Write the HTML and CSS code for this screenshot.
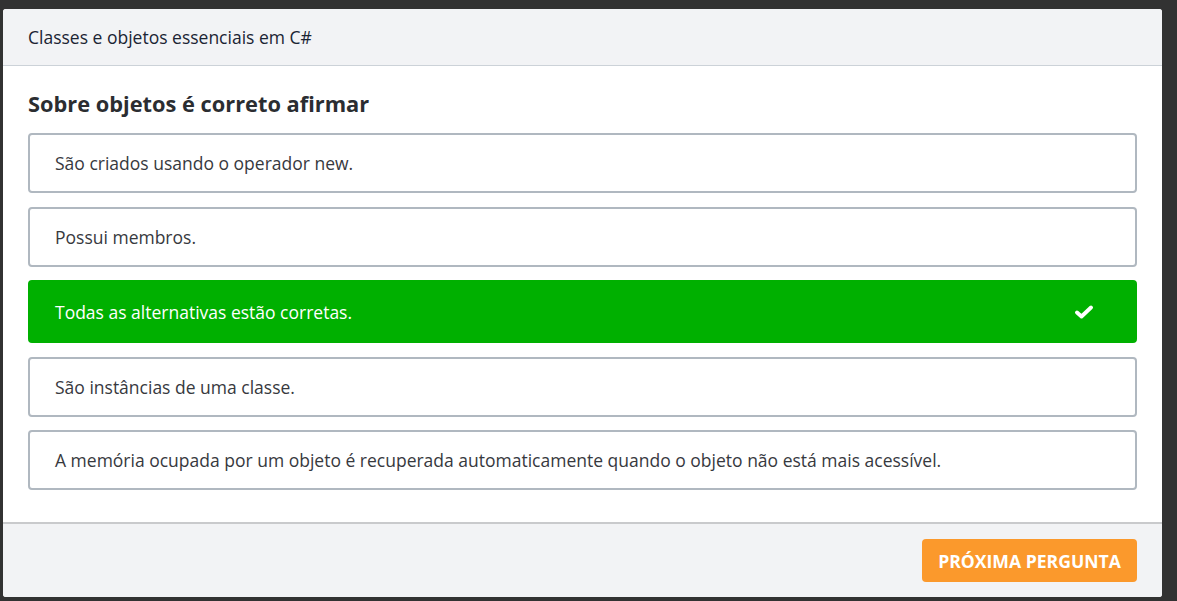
FILE: index.html
```html
<!DOCTYPE html>
<html lang="pt">
<head>
<meta charset="utf-8">
<title>Quiz</title>
<link rel="stylesheet" href="styles.css">
</head>
<body>
<div class="modal">
  <div class="modal-header">Classes e objetos essenciais em C#</div>
  <div class="modal-body">
    <h2 class="question">Sobre objetos é correto afirmar</h2>
    <div class="options">
      <div class="option">São criados usando o operador new.</div>
      <div class="option">Possui membros.</div>
      <div class="option correct">
        <span>Todas as alternativas estão corretas.</span>
        <svg class="check" width="18" height="14" viewBox="0 0 18 14"><path d="M2 7.5 L6.5 11.5 L16 2.5" fill="none" stroke="#fff" stroke-width="3.8" stroke-linecap="round" stroke-linejoin="round"/></svg>
      </div>
      <div class="option">São instâncias de uma classe.</div>
      <div class="option">A memória ocupada por um objeto é recuperada automaticamente quando o objeto não está mais acessível.</div>
    </div>
  </div>
  <div class="modal-footer">
    <button class="next-btn">PRÓXIMA PERGUNTA</button>
  </div>
</div>
</body>
</html>
```
FILE: styles.css
```css
* { box-sizing: border-box; }
html, body { margin: 0; padding: 0; }
body {
  background: #323232;
  padding: 9px 15px 4px 3px;
  font-family: "Open Sans", "Noto Sans", sans-serif;
  width: 1177px;
  height: 601px;
  overflow: hidden;
}
.modal {
  width: 1159px;
  height: 588px;
  background: #fff;
  border-radius: 3px;
  overflow: hidden;
  display: flex;
  flex-direction: column;
}
.modal-header {
  background: #f2f3f5;
  height: 57px;
  border-bottom: 1px solid #ccd2d8;
  padding: 16px 25px;
  font-size: 17.5px;
  line-height: 24px;
  color: #1b2433;
}
.modal-body {
  flex: 1;
  padding: 26px 25px 0;
}
.question {
  margin: 0 0 17px;
  font-size: 21.8px;
  line-height: 24px;
  font-weight: 700;
  color: #2b2d31;
}
.options {
  display: flex;
  flex-direction: column;
  gap: 13.5px;
}
.option {
  border: 2px solid #b0b8c0;
  border-radius: 4px;
  height: 60px;
  padding: 0 25px;
  display: flex;
  align-items: center;
  justify-content: space-between;
  font-size: 17.5px;
  color: #37393e;
}
.option.correct {
  height: 63px;
  background: #00b000;
  border-color: #00b000;
  color: #fff;
}
.check {
  margin-right: 17px;
}
.modal-footer {
  height: 75px;
  background: #f2f3f5;
  border-top: 2px solid #c9cacc;
  display: flex;
  justify-content: flex-end;
  align-items: center;
  padding: 0 25px;
}
.next-btn {
  background: #fb992c;
  color: #fff;
  border: none;
  border-radius: 4px;
  width: 215px;
  height: 43px;
  font-family: "Open Sans", "Noto Sans", sans-serif;
  font-size: 17.6px;
  font-weight: 700;
  padding: 0;
}
```
